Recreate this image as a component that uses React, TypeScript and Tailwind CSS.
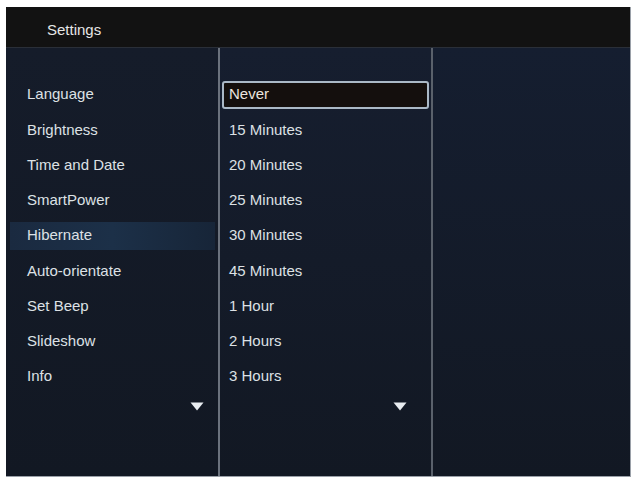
const menu = ['Language', 'Brightness', 'Time and Date', 'SmartPower', 'Hibernate', 'Auto-orientate', 'Set Beep', 'Slideshow', 'Info']
const options = ['Never', '15 Minutes', '20 Minutes', '25 Minutes', '30 Minutes', '45 Minutes', '1 Hour', '2 Hours', '3 Hours']

function Arrow() {
    return (
        <svg width="14" height="9" viewBox="0 0 14 9">
            <path d="M0.5 0.5 L13.5 0.5 L7 8.5 Z" fill="#e8ecf0" />
        </svg>
    )
}

export default function App() {
    return (
        <div className="w-[637px] h-[484px] bg-white pt-[7px] pl-[6px] font-['Liberation_Sans',sans-serif]">
            <div className="w-[625px] h-[470px] flex flex-col bg-[#131a27] border-r border-b border-[#9aa0a8]">
                {/* Header */}
                <div className="h-[41px] shrink-0 bg-[#121212] flex items-center pl-[41px] pt-[6px] border-b border-[#2a2f38]">
                    <span className="text-[15px] text-[#e6e6e6]">Settings</span>
                </div>

                <div className="flex flex-1 min-h-0">
                    {/* Menu column */}
                    <div className="w-[212px] shrink-0 flex flex-col pt-[29px] bg-gradient-to-b from-[#151c2a] to-[#121823]">
                        {menu.map(item => (
                            <div key={item} className="h-[35.25px] flex items-center pl-[4px] pr-[3px]">
                                <div
                                    className={
                                        item === 'Hibernate'
                                            ? 'w-full h-[28px] flex items-center pl-[17px] bg-gradient-to-r from-[#1a2a40] via-[#1c3048] to-[#172538]'
                                            : 'w-full h-[28px] flex items-center pl-[17px]'
                                    }
                                >
                                    <span className="text-[15px] text-[#dde1e5]">{item}</span>
                                </div>
                            </div>
                        ))}
                        <div className="flex justify-end pr-[14px] pt-[8px]">
                            <Arrow />
                        </div>
                    </div>

                    <div className="w-[2px] shrink-0 bg-[#6b727d]" />

                    {/* Options column */}
                    <div className="w-[211px] shrink-0 flex flex-col pt-[29px] bg-gradient-to-b from-[#161e2f] to-[#121823]">
                        {options.map(opt => (
                            <div key={opt} className="h-[35.25px] flex items-center pl-[2px] pr-[2px]">
                                <div
                                    className={
                                        opt === 'Never'
                                            ? 'w-full h-[28px] flex items-center pl-[5px] bg-[#140f0d] border-2 border-[#aab8c6] rounded-[3px]'
                                            : 'w-full h-[28px] flex items-center pl-[7px]'
                                    }
                                >
                                    <span className={opt === 'Never' ? 'text-[15px] text-[#ebe5df]' : 'text-[15px] text-[#dde1e5]'}>{opt}</span>
                                </div>
                            </div>
                        ))}
                        <div className="flex justify-end pr-[24px] pt-[8px]">
                            <Arrow />
                        </div>
                    </div>

                    <div className="w-[2px] shrink-0 bg-[#5a616b]" />

                    {/* Preview column */}
                    <div className="flex-1 bg-gradient-to-b from-[#151e30] to-[#121823]" />
                </div>
            </div>
        </div>
    )
}
